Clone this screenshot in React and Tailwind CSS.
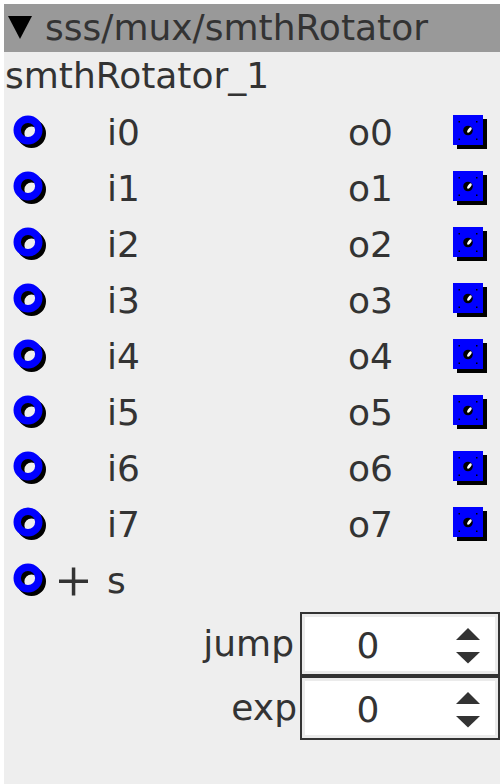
import React from "react";

function InPort() {
  return (
    <svg width="36" height="36" viewBox="0 0 36 36" className="shrink-0">
      <circle cx="18.5" cy="18.5" r="10.8" fill="none" stroke="#000" strokeWidth="7.4" />
      <circle cx="15" cy="15" r="10.8" fill="none" stroke="#0000ff" strokeWidth="7.4" />
    </svg>
  );
}

function OutPort() {
  return (
    <svg width="36" height="36" viewBox="0 0 36 36" className="shrink-0">
      <rect x="4" y="4" width="30" height="30" fill="#000" />
      <rect x="0" y="0" width="30" height="30" fill="#0000ff" />
      <circle cx="15" cy="15.5" r="4.8" fill="#000" />
      <ellipse cx="16.4" cy="15" rx="1.5" ry="3.2" transform="rotate(35 16.4 15)" fill="#fff" />
      <rect x="5.5" y="6" width="1.5" height="1.5" fill="#000" />
      <rect x="23" y="6" width="1.5" height="1.5" fill="#000" />
      <rect x="5.5" y="23.5" width="1.5" height="1.5" fill="#000" />
      <rect x="23" y="23.5" width="1.5" height="1.5" fill="#000" />
    </svg>
  );
}

function Row({ left, right, plus }) {
  return (
    <div className="flex h-[56px] items-center">
      <div className="flex w-[103px] shrink-0 items-center pl-[9px]">
        <InPort />
        {plus && (
          <svg width="30" height="30" viewBox="0 0 30 30" className="ml-[9px] shrink-0">
            <rect x="1" y="13.5" width="29" height="3.5" fill="#333333" />
            <rect x="13.8" y="1.5" width="3.5" height="28" fill="#333333" />
          </svg>
        )}
      </div>
      <div className="w-[241px] shrink-0 leading-[48px]">{left}</div>
      {right && (
        <>
          <div className="w-[105px] shrink-0 leading-[48px]">{right}</div>
          <OutPort />
        </>
      )}
    </div>
  );
}

function Spin({ label, mr }) {
  return (
    <div className="flex h-[64px] justify-end">
      <div className={`pt-[8px] leading-[48px] ${mr}`}>{label}</div>
      <div className="h-[64px] w-[200px] border-2 border-[#333333]">
        <div className="flex h-full border-[3px] border-[#ebebeb] bg-white">
          <div className="w-[126px] pt-[5px] text-center leading-[48px]">0</div>
          <svg width="24" height="36" viewBox="0 0 24 36" className="ml-[25px] mt-[11px] shrink-0">
            <polygon points="12,0 24,12 0,12" fill="#333333" />
            <polygon points="0,24 24,24 12,35.5" fill="#333333" />
          </svg>
        </div>
      </div>
    </div>
  );
}

export default function App() {
  const rows = [0, 1, 2, 3, 4, 5, 6, 7];
  return (
    <div className="min-h-[784px] bg-white pl-[4px] pt-[4px]">
      <div className="h-[780px] w-[496px] overflow-hidden bg-[#eeeeee] font-['DejaVu_Sans',sans-serif] text-[36px] text-[#333333]">
        <div className="flex h-[48px] items-center bg-[#999999]">
          <svg width="24" height="24" viewBox="0 0 24 24" className="ml-[4px] shrink-0">
            <polygon points="0,0 24,0 12,23" fill="#000" />
          </svg>
          <span className="ml-[13px] leading-[48px]">sss/mux/smthRotator</span>
        </div>
        <div className="h-[53px] pl-[1px] leading-[48px]">smthRotator_1</div>
        {rows.map((n) => (
          <Row key={n} left={`i${n}`} right={`o${n}`} />
        ))}
        <Row left="s" plus />
        <div className="mt-[3px]">
          <Spin label="jump" mr="mr-[6px]" />
          <Spin label="exp" mr="mr-[3px]" />
        </div>
      </div>
    </div>
  );
}
